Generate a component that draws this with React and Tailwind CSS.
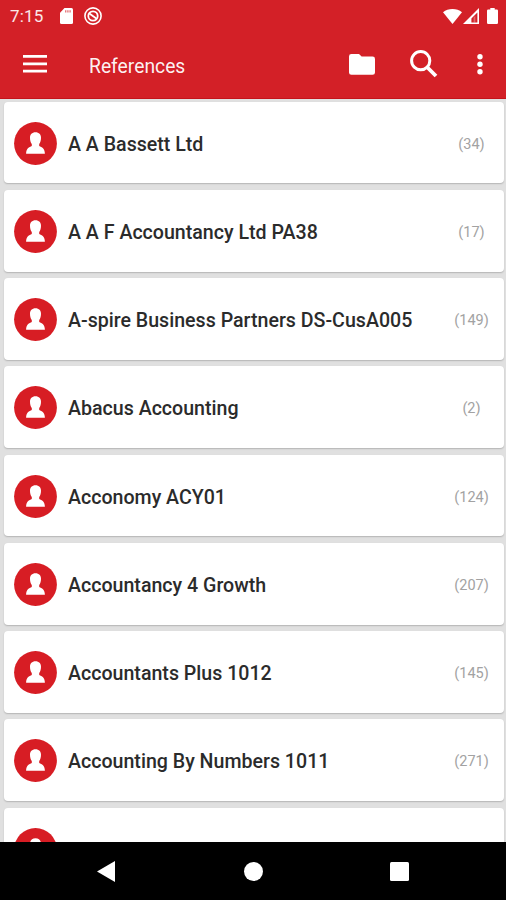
import React from 'react';

const references = [
  { name: 'A A Bassett Ltd', count: 34 },
  { name: 'A A F Accountancy Ltd PA38', count: 17 },
  { name: 'A-spire Business Partners DS-CusA005', count: 149 },
  { name: 'Abacus Accounting', count: 2 },
  { name: 'Acconomy ACY01', count: 124 },
  { name: 'Accountancy 4 Growth', count: 207 },
  { name: 'Accountants Plus 1012', count: 145 },
  { name: 'Accounting By Numbers 1011', count: 271 },
  { name: '', count: null },
];

const App = () => (
  <div className="flex h-[900px] w-[506px] flex-col overflow-hidden bg-[#e0e0e0] font-['Roboto',sans-serif]">
    <header className="h-[99px] shrink-0 border-b border-[#c4141b] bg-[#d32027] text-white">
      <StatusBar />
      <Toolbar />
    </header>

    <main className="flex min-h-0 flex-1 flex-col gap-[6.5px] overflow-hidden pl-[3.5px] pr-[2.5px] pt-[2.7px]">
      {references.map((item, i) => (
        <ReferenceCard key={i} name={item.name} count={item.count} />
      ))}
    </main>

    <NavigationBar />
  </div>
);

// --- HEADER ---
const StatusBar = () => (
  <div className="flex h-8 items-center pl-[10px] pr-2">
    <span className="w-[50px] text-[17px] leading-8 tracking-[0.2px] text-white/90">7:15</span>
    <svg className="h-4 w-[13px]" viewBox="0 0 13 16" fill="currentColor">
      <path d="M4.5 0H11.5Q13 0 13 1.5V14.5Q13 16 11.5 16H1.5Q0 16 0 14.5V4.8Z" />
      <path d="M5 2.2H6.4V4.6H5ZM7.2 2.2H8.6V4.6H7.2ZM9.4 2.2H10.8V4.6H9.4Z" fill="#d32027" fillOpacity="0.6" />
    </svg>
    <svg className="ml-[11px] h-[18px] w-[18px]" viewBox="0 0 18 18" fill="none" stroke="currentColor">
      <circle cx="9" cy="9" r="8.1" strokeWidth="1.6" />
      <circle cx="9" cy="9" r="4.7" strokeWidth="1.8" />
      <path d="M5 6.2L13 12" strokeWidth="1.8" />
    </svg>
    <div className="ml-auto flex items-center">
      <svg className="h-[15px] w-[19px]" viewBox="0 0 19 15" fill="currentColor">
        <path d="M0 3.2Q4 0 9.5 0T19 3.2L9.5 15Z" />
      </svg>
      <svg className="ml-[1px] h-4 w-4" viewBox="0 0 16 16" fill="currentColor">
        <path fillRule="evenodd" d="M16 0V16H0ZM14.4 4.4L8.4 10.4V14.4H14.4Z" />
        <path d="M10.6 9.6L12.4 7.8V14.5H10.6Z" fillOpacity="0.3" />
      </svg>
      <svg className="ml-2 h-4 w-[11px]" viewBox="0 0 11 16" fill="currentColor">
        <path d="M3.3 0H7.7V1.6H9.8Q11 1.6 11 2.8V14.8Q11 16 9.8 16H1.2Q0 16 0 14.8V2.8Q0 1.6 1.2 1.6H3.3Z" />
      </svg>
    </div>
  </div>
);

const Toolbar = () => (
  <div className="flex h-16 items-center pl-[23px] pr-[23.5px]">
    <svg className="h-[18px] w-6" viewBox="0 0 24 18" fill="currentColor">
      <path d="M0 0H24V2.8H0ZM0 7.4H24V10.2H0ZM0 14.8H24V17.6H0Z" />
    </svg>
    <h1 className="ml-[42px] pt-[5px] text-[19.3px] font-normal leading-6 text-white/95">References</h1>
    <svg className="ml-auto h-[21px] w-[26px]" viewBox="0 0 26 21" fill="currentColor">
      <path d="M2.4 0H10L12.6 2.6H23.6Q26 2.6 26 5V18.4Q26 20.8 23.6 20.8H2.4Q0 20.8 0 18.4V2.4Q0 0 2.4 0Z" />
    </svg>
    <svg className="ml-[35px] h-7 w-7" viewBox="0 0 28 28" fill="none" stroke="currentColor">
      <circle cx="10.7" cy="10.7" r="9.1" strokeWidth="3" />
      <path d="M17 17L26 26" strokeWidth="3.8" />
    </svg>
    <svg className="ml-[39px] h-[22px] w-[6px]" viewBox="0 0 6 22" fill="currentColor">
      <circle cx="3" cy="3.7" r="2.7" />
      <circle cx="3" cy="11.2" r="2.7" />
      <circle cx="3" cy="18.8" r="2.7" />
    </svg>
  </div>
);

// --- LIST ---
const ReferenceCard = ({ name, count }) => (
  <div className="flex h-[81.75px] shrink-0 items-center rounded-[4px] bg-white pl-[10.5px] shadow-[0_1px_1.5px_rgba(0,0,0,0.2)]">
    <svg className="mt-[1px] h-[43px] w-[43px] shrink-0" viewBox="0 0 43 43">
      <circle cx="21.5" cy="21.5" r="21.4" fill="#d71d24" />
      <path
        d="M21.5 10.2C25 10.2 27 12.5 27 15.7C27 18.6 26.2 20.6 25.2 22V24C27.8 25.2 30.9 26.4 30.9 31.8H12.1C12.1 26.4 15.2 25.2 17.8 24V22C16.8 20.6 16 18.6 16 15.7C16 12.5 18 10.2 21.5 10.2Z"
        fill="#fff"
      />
    </svg>
    <span className="ml-[11px] flex-1 whitespace-nowrap pt-[4px] text-[19.6px] font-medium leading-6 text-[#2b2b2b]">{name}</span>
    <span className="w-[64px] pt-[4px] text-center text-[14.5px] leading-5 text-[#a2a2a2]">
      {count !== null && `(${count})`}
    </span>
  </div>
);

// --- SYSTEM NAVIGATION ---
const NavigationBar = () => (
  <nav className="flex h-[58px] shrink-0 items-center bg-black pl-[97px] text-white">
    <svg className="h-[21px] w-[18px]" viewBox="0 0 18 21" fill="currentColor">
      <path d="M18 0V21L0 10.5Z" />
    </svg>
    <div className="ml-[129px] h-[19px] w-[19px] rounded-full bg-white" />
    <div className="ml-[127px] h-[19px] w-[19px] rounded-[1.5px] bg-white" />
  </nav>
);

export default App;
